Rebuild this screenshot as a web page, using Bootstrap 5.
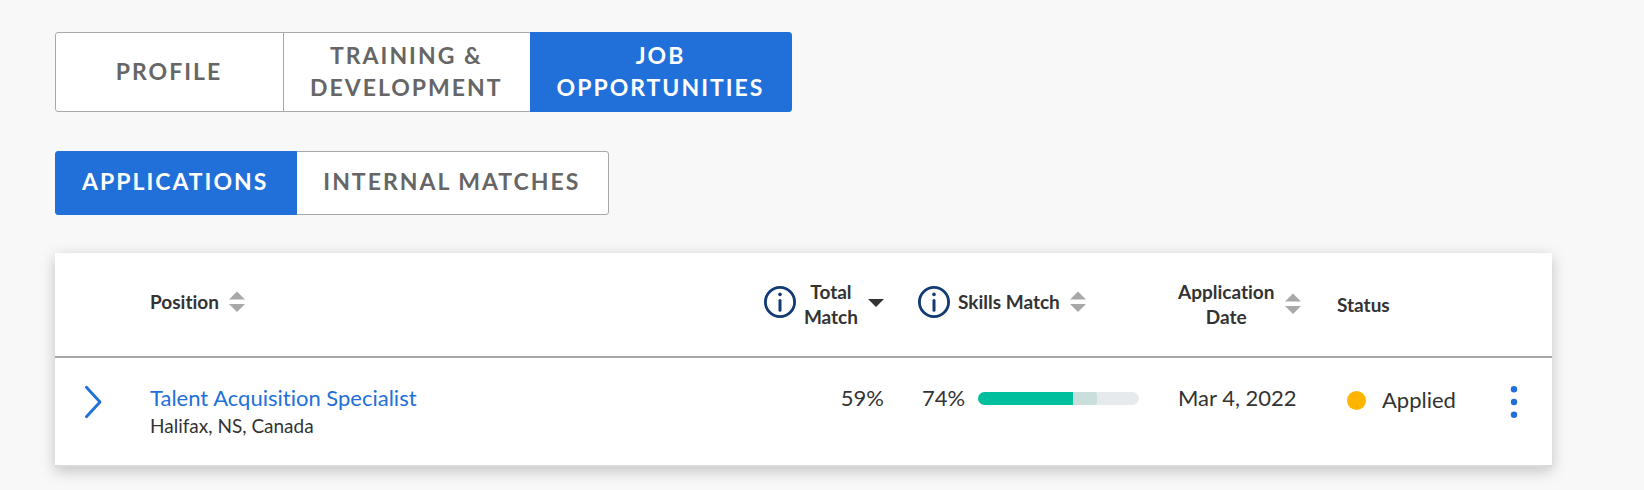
<!DOCTYPE html>
<html lang="en">
<head>
<meta charset="utf-8">
<meta name="viewport" content="width=device-width, initial-scale=1">
<title>Job Opportunities</title>
<link href="https://cdn.jsdelivr.net/npm/bootstrap@5.3.0/dist/css/bootstrap.min.css" rel="stylesheet">
<style>
  body { font-family: Lato, "Liberation Sans", sans-serif; font-variant-ligatures: none; background: #f8f8f8; color: #333; font-size: 22px; line-height: 28px; }
  .page { padding: 32px 92px 24px 55px; }
  .tabs .btn {
    --bs-btn-color: #666; --bs-btn-bg: #fff; --bs-btn-border-color: #a8a8a8;
    --bs-btn-active-color: #fff; --bs-btn-active-bg: #2170da; --bs-btn-active-border-color: #2170da;
    --bs-btn-hover-color: #444; --bs-btn-hover-bg: #fff; --bs-btn-hover-border-color: #a8a8a8;
    --bs-btn-border-radius: 3px;
    flex: 0 0 auto; padding: 6px 27px 8px 26px; font-size: 23px; font-weight: 700; line-height: 32px;
    letter-spacing: 2px; text-transform: uppercase;
  }
  .tabs-main { margin-bottom: 39px; }
  .tabs-main .btn:first-child { min-width: 229px; }
  .tabs-sub { margin-bottom: 38px; }
  .tabs-sub .btn { padding: 13px 28px 17px 26px; }
  .panel { background: #fff; box-shadow: 0 4px 14px rgba(0,0,0,.22); border-bottom: 2px solid #d9dada; }
  .jobs { table-layout: fixed; min-width: 1100px; color: inherit; }
  .jobs th, .jobs td { padding: 0 18px 0 16px; text-align: left; }
  .jobs thead tr { height: 104px; border-bottom: 2px solid #a8a8a8; }
  .jobs th { vertical-align: middle; padding-bottom: 2px; font-size: 19px; line-height: 25px; font-weight: 700; }
  .jobs th.plain-head { padding-bottom: 0; }
  .jobs td { vertical-align: top; padding-top: 26px; padding-bottom: 26px; }
  .col-expand { width: 79px; } .col-total { width: 181px; } .col-skills { width: 260px; }
  .col-date { width: 159px; } .col-status { width: 155px; } .col-menu { width: 76px; }
  .sort { border: 0; background: none; padding: 0; color: inherit; font: inherit; display: flex; align-items: center; gap: 10px; }
  .info { border: 0; background: none; padding: 0; display: flex; }
  .job-link { color: #2170da; text-decoration: none; }
  .place { font-size: 19px; line-height: 27px; }
  .match { padding-left: 4px; padding-right: 5px; gap: 13px; }
  .match-bar { --bs-progress-height: 13px; --bs-progress-bg: #e6eaed; --bs-progress-border-radius: 7px; }
  .has-skill { background: #00bf9c; }
  .near-skill { background: #c8dfdb; border-radius: 0 3px 3px 0; }
  .dot { width: 19px; height: 19px; background: #ffb400; }
  .jobs td.status-cell { padding-top: 28px; padding-left: 26px; padding-right: 0; }
  .jobs td.icon-cell { padding: 27px 0 0; text-align: center; }
  .icon-btn { border: 0; background: none; padding: 0; color: #2170da; display: inline-flex; }
  .jobs td.expand-cell { padding-left: 29px; text-align: left; }
</style>
</head>
<body>
<svg class="d-none" aria-hidden="true">
  <symbol id="sort-both" viewBox="0 0 16 22"><path fill="#a8a8a8" d="M0 8.5 8 .5l8 8zM0 13h16l-8 8z"/></symbol>
  <symbol id="sort-down" viewBox="0 0 16 22"><path fill="#333" d="M0 6h16l-8 8z"/></symbol>
  <symbol id="info" viewBox="0 0 32 32"><circle cx="16" cy="16" r="14.6" fill="none" stroke="#123a75" stroke-width="2.8"/><circle cx="16" cy="8.4" r="1.8" fill="#123a75"/><path d="M16 14.6v9.6" stroke="#123a75" stroke-width="3" stroke-linecap="round"/></symbol>
</svg>
<main class="page">
  <nav class="tabs tabs-main d-flex" aria-label="Sections">
    <div class="btn-group">
      <button type="button" class="btn">Profile</button>
      <button type="button" class="btn">Training &amp;<br>Development</button>
      <button type="button" class="btn active" aria-current="true">Job<br>Opportunities</button>
    </div>
  </nav>
  <nav class="tabs tabs-sub d-flex" aria-label="Job lists">
    <div class="btn-group">
      <button type="button" class="btn active" aria-current="true">Applications</button>
      <button type="button" class="btn">Internal matches</button>
    </div>
  </nav>
  <section class="panel">
    <table class="jobs w-100">
      <colgroup><col class="col-expand"><col><col class="col-total"><col class="col-skills"><col class="col-date"><col class="col-status"><col class="col-menu"></colgroup>
      <thead>
        <tr>
          <th></th>
          <th scope="col"><button type="button" class="sort pb-1">Position<svg width="16" height="22"><use href="#sort-both"/></svg></button></th>
          <th scope="col">
            <div class="d-flex align-items-center justify-content-end gap-2">
              <button type="button" class="info pb-1" aria-label="About total match"><svg width="32" height="32"><use href="#info"/></svg></button>
              <button type="button" class="sort"><span>Total<br>Match</span><svg width="16" height="22"><use href="#sort-down"/></svg></button>
            </div>
          </th>
          <th scope="col">
            <div class="d-flex align-items-center gap-2 pb-1">
              <button type="button" class="info" aria-label="About skills match"><svg width="32" height="32"><use href="#info"/></svg></button>
              <button type="button" class="sort text-nowrap">Skills Match<svg width="16" height="22"><use href="#sort-both"/></svg></button>
            </div>
          </th>
          <th scope="col"><button type="button" class="sort"><span>Application<br>Date</span><svg width="16" height="22"><use href="#sort-both"/></svg></button></th>
          <th scope="col" class="plain-head">Status</th>
          <th></th>
        </tr>
      </thead>
      <tbody>
        <tr>
          <td class="icon-cell expand-cell"><button type="button" class="icon-btn" aria-label="Show details"><svg width="18" height="34" viewBox="0 0 18 34" fill="none" stroke="currentColor" stroke-width="2.9" stroke-linecap="round" stroke-linejoin="round"><path d="M2.4 2.3 16 17 2.4 31.7"/></svg></button></td>
          <td><a class="job-link" href="#">Talent Acquisition Specialist</a><div class="place">Halifax, NS, Canada</div></td>
          <td class="text-end">59%</td>
          <td>
            <div class="match d-flex align-items-center">
              <span>74%</span>
              <div class="progress match-bar flex-grow-1" role="img" aria-label="74% skills match">
                <div class="progress-bar has-skill" style="width:59%"></div>
                <div class="progress-bar near-skill" style="width:15%"></div>
              </div>
            </div>
          </td>
          <td class="text-nowrap">Mar 4, 2022</td>
          <td class="status-cell"><div class="d-flex align-items-center gap-3"><span class="dot rounded-circle"></span>Applied</div></td>
          <td class="icon-cell"><button type="button" class="icon-btn" aria-label="More actions"><svg width="8" height="34" viewBox="0 0 8 34" fill="currentColor"><circle cx="4" cy="4.2" r="3.2"/><circle cx="4" cy="17" r="3.2"/><circle cx="4" cy="29.8" r="3.2"/></svg></button></td>
        </tr>
      </tbody>
    </table>
  </section>
</main>
<script src="https://cdn.jsdelivr.net/npm/bootstrap@5.3.0/dist/js/bootstrap.bundle.min.js"></script>
</body>
</html>
